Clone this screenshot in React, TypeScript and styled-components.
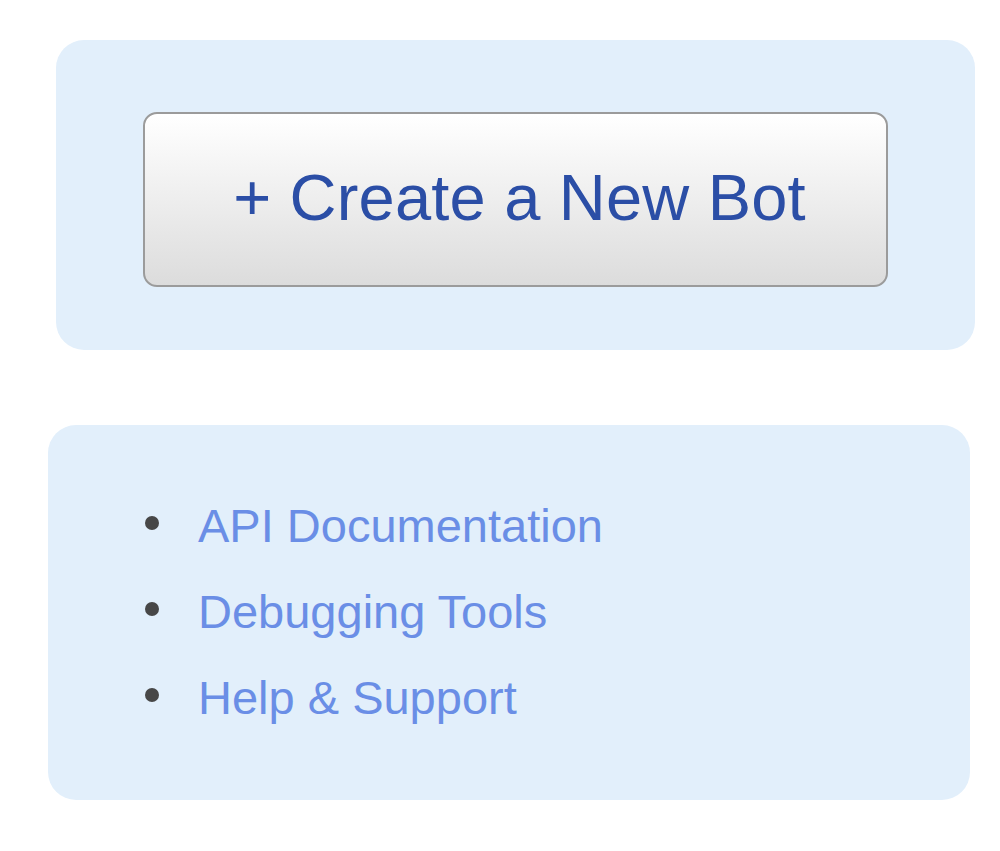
import React from "react";
import styled, { createGlobalStyle } from "styled-components";

const Global = createGlobalStyle`
  html, body {
    margin: 0;
    padding: 0;
    background: #ffffff;
    font-family: "Liberation Sans", Arial, sans-serif;
  }
`;

const Page = styled.div`
  display: flex;
  flex-direction: column;
  align-items: flex-start;
  gap: 75px;
  padding: 40px 0 0 48px;
`;

const Panel = styled.div<{ $width: number }>`
  box-sizing: border-box;
  width: ${({ $width }) => $width}px;
  background: #e2effb;
  border-radius: 28px;
`;

const ActionPanel = styled(Panel)`
  margin-left: 8px;
  padding: 72px 87px 63px 87px;
  height: 310px;
`;

const LinksPanel = styled(Panel)`
  padding: 58px 40px 54px 97px;
  height: 375px;
`;

const BigButton = styled.button`
  box-sizing: border-box;
  width: 745px;
  height: 175px;
  display: flex;
  align-items: center;
  justify-content: center;
  padding: 0 0 4px 8px;
  border: 2px solid #9b9b9b;
  border-radius: 14px;
  background: linear-gradient(to bottom, #ffffff 0%, #f3f3f3 35%, #dcdcdc 100%);
  color: #2b4ea6;
  font-family: "Liberation Sans", Arial, sans-serif;
  font-size: 65px;
  letter-spacing: 0.2px;
  cursor: pointer;
`;

const LinkList = styled.ul`
  list-style: none;
  margin: 0;
  padding: 0;
`;

const Item = styled.li`
  position: relative;
  padding-left: 53px;
  font-size: 47px;
  line-height: 86px;

  &::before {
    content: "";
    position: absolute;
    left: 0;
    top: 33px;
    width: 14px;
    height: 14px;
    border-radius: 50%;
    background: #474747;
  }
`;

const ItemLink = styled.a`
  color: #6a8ee6;
  text-decoration: none;
`;

const links = ["API Documentation", "Debugging Tools", "Help & Support"];

export default function App() {
  return (
    <>
      <Global />
      <Page>
        <ActionPanel $width={919}>
          <BigButton>+ Create a New Bot</BigButton>
        </ActionPanel>
        <LinksPanel $width={922}>
          <LinkList>
            {links.map((label) => (
              <Item key={label}>
                <ItemLink href="#">{label}</ItemLink>
              </Item>
            ))}
          </LinkList>
        </LinksPanel>
      </Page>
    </>
  );
}
